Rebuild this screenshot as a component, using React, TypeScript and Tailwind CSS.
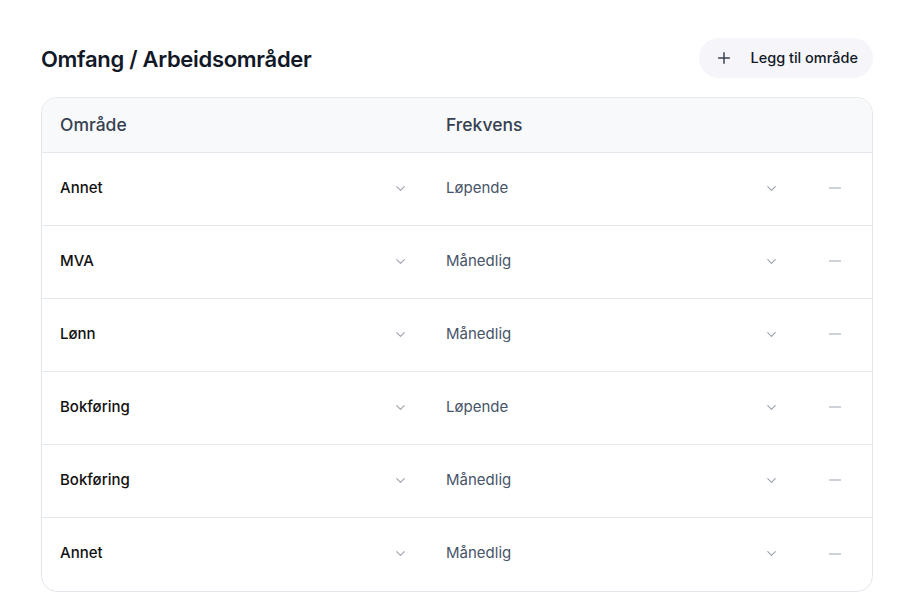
import React from 'react';

const rows = [
  { area: 'Annet', freq: 'Løpende' },
  { area: 'MVA', freq: 'Månedlig' },
  { area: 'Lønn', freq: 'Månedlig' },
  { area: 'Bokføring', freq: 'Løpende' },
  { area: 'Bokføring', freq: 'Månedlig' },
  { area: 'Annet', freq: 'Månedlig' },
];

const Chevron = () => (
  <svg width="15" height="15" viewBox="0 0 24 24" fill="none" stroke="#9ca3af" strokeWidth="1.8" strokeLinecap="round" strokeLinejoin="round">
    <path d="M6 9l6 6 6-6" />
  </svg>
);

const App: React.FC = () => {
  return (
    <div className="min-h-screen bg-white pl-[41px] pr-[35px] pt-[38px]" style={{ fontFamily: 'Inter, "Noto Sans", sans-serif' }}>
      <div className="flex items-center justify-between h-10">
        <h2 className="text-[22px] font-semibold text-[#111827] tracking-[-0.3px] pt-[2px]">Omfang / Arbeidsområder</h2>
        <button className="flex items-center h-10 rounded-full bg-[#f5f5fa] pl-[17px] pr-[15px] text-[14.5px] font-medium text-[#111827]">
          <svg width="16" height="16" viewBox="0 0 24 24" fill="none" stroke="#374151" strokeWidth="2.2" strokeLinecap="round" className="mr-[18px]">
            <path d="M12 4v16M4 12h16" />
          </svg>
          Legg til område
        </button>
      </div>

      <div className="mt-[19px] rounded-[16px] border border-[#e2e8ee] overflow-hidden">
        <div className="grid grid-cols-[385px_371px_1fr] h-[55px] items-center bg-[#f8f9fb] border-b border-[#e2e8ee] text-[17.5px] font-medium text-[#374151]">
          <div className="px-[18px]">Område</div>
          <div className="px-[19px]">Frekvens</div>
          <div />
        </div>
        {rows.map((r, i) => (
          <div
            key={i}
            className={`grid grid-cols-[385px_371px_1fr] h-[73px] items-center pb-[2px] ${i < rows.length - 1 ? 'border-b border-[#e5e9ee]' : ''}`}
          >
            <div className="flex items-center justify-between pl-[18px] pr-[19px]">
              <span className="text-[15px] font-medium text-[#111]">{r.area}</span>
              <Chevron />
            </div>
            <div className="flex items-center justify-between pl-[19px] pr-[19px]">
              <span className="text-[15px] text-[#475569]">{r.freq}</span>
              <Chevron />
            </div>
            <div className="flex justify-center">
              <div className="w-3 h-[2px] bg-[#cdd1d8]" />
            </div>
          </div>
        ))}
      </div>
    </div>
  );
};

export default App;
